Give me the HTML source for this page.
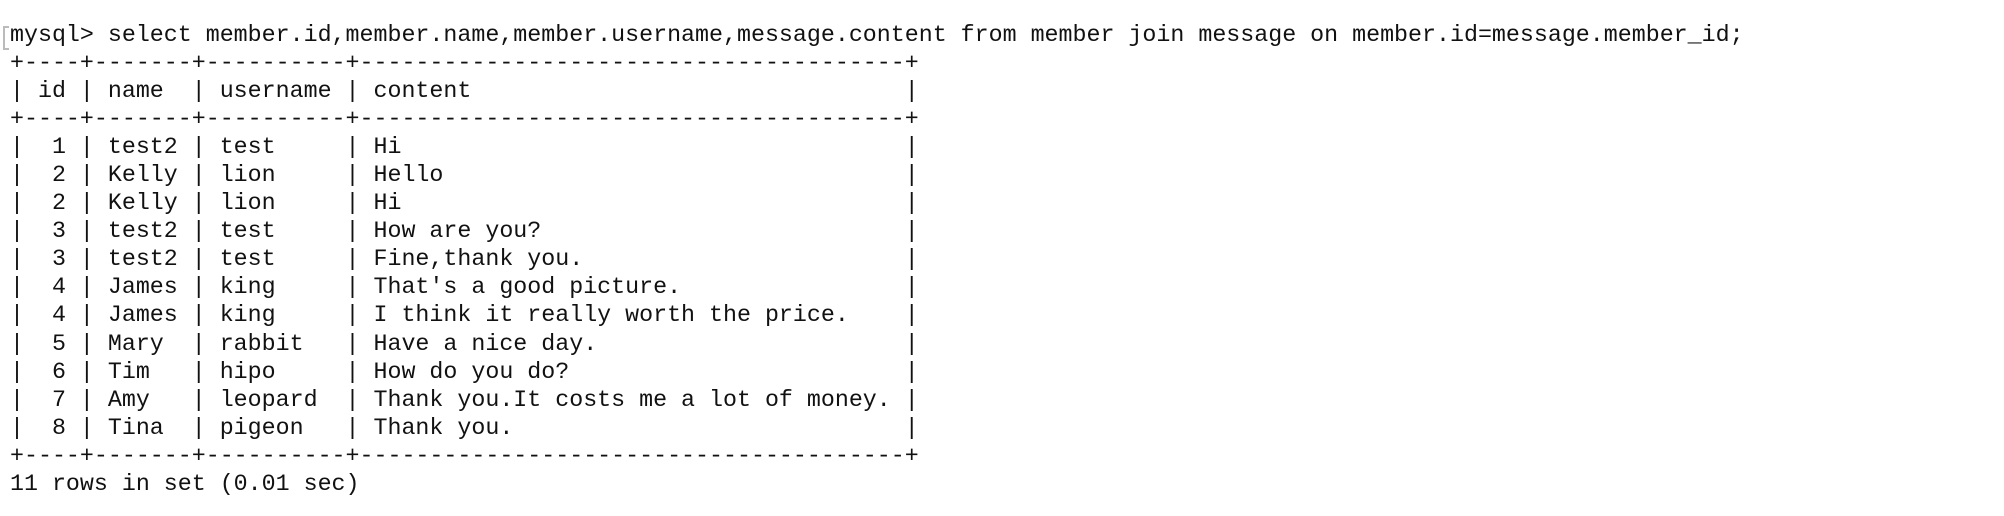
<!DOCTYPE html>
<html><head><meta charset="utf-8"><style>
html,body{margin:0;padding:0;background:#fff;width:2004px;height:516px;overflow:hidden}
pre{position:absolute;left:10px;top:21px;margin:0;font-family:"Liberation Mono",monospace;font-size:23.3px;line-height:28.05px;color:#111}
.b{position:absolute;left:3px;top:26px;width:4px;height:20px;border:2px solid #bbb;border-right:none}
</style></head><body>
<div class="b"></div>
<pre>mysql&gt; select member.id,member.name,member.username,message.content from member join message on member.id=message.member_id;
+----+-------+----------+---------------------------------------+
| id | name  | username | content                               |
+----+-------+----------+---------------------------------------+
|  1 | test2 | test     | Hi                                    |
|  2 | Kelly | lion     | Hello                                 |
|  2 | Kelly | lion     | Hi                                    |
|  3 | test2 | test     | How are you?                          |
|  3 | test2 | test     | Fine,thank you.                       |
|  4 | James | king     | That's a good picture.                |
|  4 | James | king     | I think it really worth the price.    |
|  5 | Mary  | rabbit   | Have a nice day.                      |
|  6 | Tim   | hipo     | How do you do?                        |
|  7 | Amy   | leopard  | Thank you.It costs me a lot of money. |
|  8 | Tina  | pigeon   | Thank you.                            |
+----+-------+----------+---------------------------------------+
11 rows in set (0.01 sec)</pre>
</body></html>
